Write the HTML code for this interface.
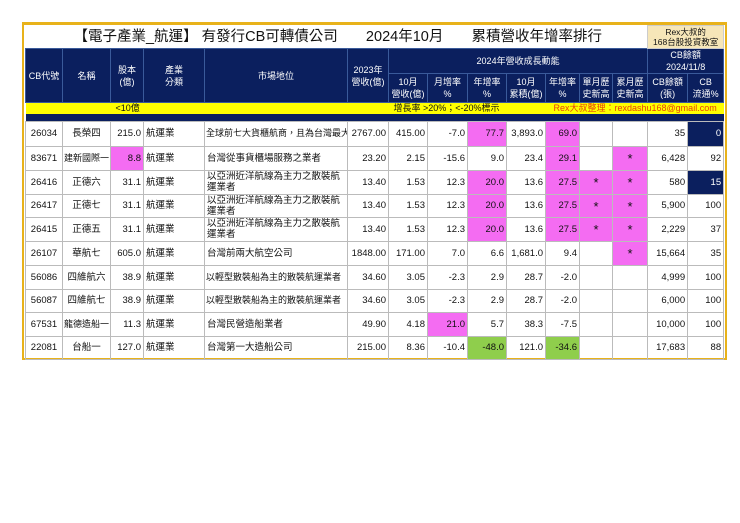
<!DOCTYPE html>
<html><head><meta charset="utf-8"><style>
body{margin:0;background:#fff;width:740px;height:523px;position:relative;font-family:"Liberation Sans","Noto Sans CJK TC",sans-serif;}
#frame{position:absolute;left:22px;top:22px;width:701px;height:333px;border:2px solid #e8b21a;border-top-width:3px;}
table{position:absolute;left:25px;top:25px;border-collapse:collapse;table-layout:fixed;width:698px;}
td{padding:0 2px;font-size:9.5px;line-height:11px;overflow:hidden;white-space:nowrap;border:1px solid #bbb;color:#111;vertical-align:middle;}
.h td{background:#0b1f5e;color:#fff;text-align:center;border:1px solid #3a5a9a;line-height:12px;font-size:9px;}
.r{text-align:right}.c{text-align:center}
.s{text-align:center;font-size:13px;line-height:8px;padding-top:2px}
.p{background:#f46cf2}.g{background:#8fce4c}.n{background:#0b1f5e;color:#fff}
.w{white-space:normal;line-height:11px}
.title td{border:none;font-size:14.5px;}
.m{padding:0 1px;font-size:9px}
</style></head><body>
<div id="frame"></div>
<table>
<colgroup><col style="width:37px"><col style="width:48px"><col style="width:33px"><col style="width:61px"><col style="width:143px"><col style="width:41px"><col style="width:39px"><col style="width:40px"><col style="width:39px"><col style="width:39px"><col style="width:34px"><col style="width:33px"><col style="width:35px"><col style="width:40px"><col style="width:36px"></colgroup>
<tr class="title" style="height:23px"><td colspan="13" style="padding-left:48px;color:#111;line-height:16px">【電子產業_航運】 有發行CB可轉債公司 &nbsp; &nbsp; &nbsp; 2024年10月 &nbsp; &nbsp; &nbsp; 累積營收年增率排行</td><td colspan="2" style="background:#f6e6b8;text-align:center;font-size:8.5px;line-height:10px;border:1px solid #ccc">Rex大叔的<br>168台股投資教室</td></tr>
<tr class="h" style="height:23px"><td rowspan="2">CB代號</td><td rowspan="2">名稱</td><td rowspan="2">股本<br>(億)</td><td rowspan="2">產業<br>分類</td><td rowspan="2">市場地位</td><td rowspan="2">2023年<br>營收(億)</td><td colspan="7">2024年營收成長動能</td><td colspan="2">CB餘額<br>2024/11/8</td></tr>
<tr class="h" style="height:29px"><td>10月<br>營收(億)</td><td>月增率<br>%</td><td>年增率<br>%</td><td>10月<br>累積(億)</td><td>年增率<br>%</td><td>單月歷<br>史新高</td><td>累月歷<br>史新高</td><td>CB餘額<br>(張)</td><td>CB<br>流通%</td></tr>
<tr style="height:11px;background:#ffff00"><td colspan="15" style="border:none;position:relative;font-size:9px;line-height:11px;height:11px"><span style="position:absolute;left:90px;top:0">&lt;10億</span><span style="position:absolute;left:368px;top:0">增長率 &gt;20%；&lt;-20%標示</span><span style="position:absolute;left:528px;top:0;color:#e8400a">Rex大叔整理：rexdashu168@gmail.com</span></td></tr>
<tr style="height:7px;background:#0b1f5e"><td colspan="15" style="border:none;line-height:0;font-size:0"></td></tr>
<tr style="height:25px"><td class="c">26034</td><td class="c">長榮四</td><td class="r">215.0</td><td>航運業</td><td class="m">全球前七大貨櫃航商，且為台灣最大</td><td class="r">2767.00</td><td class="r">415.00</td><td class="r">-7.0</td><td class="r p">77.7</td><td class="r">3,893.0</td><td class="r p">69.0</td><td></td><td></td><td class="r">35</td><td class="r n">0</td></tr>
<tr style="height:24px"><td class="c">83671</td><td class="c m">建新國際一</td><td class="r p">8.8</td><td>航運業</td><td>台灣從事貨櫃場服務之業者</td><td class="r">23.20</td><td class="r">2.15</td><td class="r">-15.6</td><td class="r">9.0</td><td class="r">23.4</td><td class="r p">29.1</td><td></td><td class="s p">*</td><td class="r">6,428</td><td class="r">92</td></tr>
<tr style="height:24px"><td class="c">26416</td><td class="c">正德六</td><td class="r">31.1</td><td>航運業</td><td class="w">以亞洲近洋航線為主力之散裝航運業者</td><td class="r">13.40</td><td class="r">1.53</td><td class="r">12.3</td><td class="r p">20.0</td><td class="r">13.6</td><td class="r p">27.5</td><td class="s p">*</td><td class="s p">*</td><td class="r">580</td><td class="r n">15</td></tr>
<tr style="height:23px"><td class="c">26417</td><td class="c">正德七</td><td class="r">31.1</td><td>航運業</td><td class="w">以亞洲近洋航線為主力之散裝航運業者</td><td class="r">13.40</td><td class="r">1.53</td><td class="r">12.3</td><td class="r p">20.0</td><td class="r">13.6</td><td class="r p">27.5</td><td class="s p">*</td><td class="s p">*</td><td class="r">5,900</td><td class="r">100</td></tr>
<tr style="height:24px"><td class="c">26415</td><td class="c">正德五</td><td class="r">31.1</td><td>航運業</td><td class="w">以亞洲近洋航線為主力之散裝航運業者</td><td class="r">13.40</td><td class="r">1.53</td><td class="r">12.3</td><td class="r p">20.0</td><td class="r">13.6</td><td class="r p">27.5</td><td class="s p">*</td><td class="s p">*</td><td class="r">2,229</td><td class="r">37</td></tr>
<tr style="height:24px"><td class="c">26107</td><td class="c">華航七</td><td class="r">605.0</td><td>航運業</td><td>台灣前兩大航空公司</td><td class="r">1848.00</td><td class="r">171.00</td><td class="r">7.0</td><td class="r">6.6</td><td class="r">1,681.0</td><td class="r">9.4</td><td></td><td class="s p">*</td><td class="r">15,664</td><td class="r">35</td></tr>
<tr style="height:24px"><td class="c">56086</td><td class="c">四維航六</td><td class="r">38.9</td><td>航運業</td><td class="m">以輕型散裝船為主的散裝航運業者</td><td class="r">34.60</td><td class="r">3.05</td><td class="r">-2.3</td><td class="r">2.9</td><td class="r">28.7</td><td class="r">-2.0</td><td></td><td></td><td class="r">4,999</td><td class="r">100</td></tr>
<tr style="height:23px"><td class="c">56087</td><td class="c">四維航七</td><td class="r">38.9</td><td>航運業</td><td class="m">以輕型散裝船為主的散裝航運業者</td><td class="r">34.60</td><td class="r">3.05</td><td class="r">-2.3</td><td class="r">2.9</td><td class="r">28.7</td><td class="r">-2.0</td><td></td><td></td><td class="r">6,000</td><td class="r">100</td></tr>
<tr style="height:24px"><td class="c">67531</td><td class="c m">龍德造船一</td><td class="r">11.3</td><td>航運業</td><td>台灣民營造船業者</td><td class="r">49.90</td><td class="r">4.18</td><td class="r p">21.0</td><td class="r">5.7</td><td class="r">38.3</td><td class="r">-7.5</td><td></td><td></td><td class="r">10,000</td><td class="r">100</td></tr>
<tr style="height:23px"><td class="c">22081</td><td class="c">台船一</td><td class="r">127.0</td><td>航運業</td><td>台灣第一大造船公司</td><td class="r">215.00</td><td class="r">8.36</td><td class="r">-10.4</td><td class="r g">-48.0</td><td class="r">121.0</td><td class="r g">-34.6</td><td></td><td></td><td class="r">17,683</td><td class="r">88</td></tr>
</table>
</body></html>
